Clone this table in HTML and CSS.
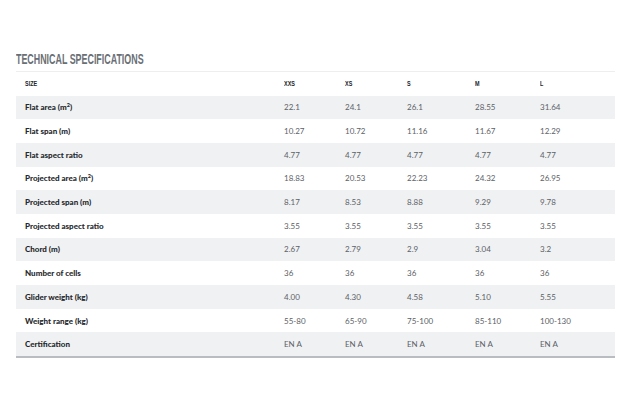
FILE: index.html
```html
<!DOCTYPE html>
<html>
<head>
<meta charset="utf-8">
<link rel="stylesheet" href="styles.css">
</head>
<body>
<section class="specs">
  <h2 class="title"><span class="title-text">TECHNICAL SPECIFICATIONS</span></h2>
  <table class="spec-table">
    <colgroup>
      <col class="c-label"><col class="c-xxs"><col class="c-xs"><col class="c-s"><col class="c-m"><col class="c-l">
    </colgroup>
    <thead>
      <tr><th><span class="cond">SIZE</span></th><th><span class="cond">XXS</span></th><th><span class="cond">XS</span></th><th><span class="cond">S</span></th><th><span class="cond">M</span></th><th><span class="cond">L</span></th></tr>
    </thead>
    <tbody>
      <tr><td>Flat area (m<sup>2</sup>)</td><td>22.1</td><td>24.1</td><td>26.1</td><td>28.55</td><td>31.64</td></tr>
      <tr><td>Flat span (m)</td><td>10.27</td><td>10.72</td><td>11.16</td><td>11.67</td><td>12.29</td></tr>
      <tr><td>Flat aspect ratio</td><td>4.77</td><td>4.77</td><td>4.77</td><td>4.77</td><td>4.77</td></tr>
      <tr><td>Projected area (m<sup>2</sup>)</td><td>18.83</td><td>20.53</td><td>22.23</td><td>24.32</td><td>26.95</td></tr>
      <tr><td>Projected span (m)</td><td>8.17</td><td>8.53</td><td>8.88</td><td>9.29</td><td>9.78</td></tr>
      <tr><td>Projected aspect ratio</td><td>3.55</td><td>3.55</td><td>3.55</td><td>3.55</td><td>3.55</td></tr>
      <tr><td>Chord (m)</td><td>2.67</td><td>2.79</td><td>2.9</td><td>3.04</td><td>3.2</td></tr>
      <tr><td>Number of cells</td><td>36</td><td>36</td><td>36</td><td>36</td><td>36</td></tr>
      <tr><td>Glider weight (kg)</td><td>4.00</td><td>4.30</td><td>4.58</td><td>5.10</td><td>5.55</td></tr>
      <tr><td>Weight range (kg)</td><td>55-80</td><td>65-90</td><td>75-100</td><td>85-110</td><td>100-130</td></tr>
      <tr><td>Certification</td><td>EN A</td><td>EN A</td><td>EN A</td><td>EN A</td><td>EN A</td></tr>
    </tbody>
  </table>
</section>
</body>
</html>
```
FILE: styles.css
```css
html, body {
  margin: 0;
  padding: 0;
  background: #ffffff;
}
body {
  font-family: Lato, "Open Sans", sans-serif;
}
.specs {
  padding: 50px 0 0 16px;
  width: 599px;
}
.title {
  margin: 0;
  height: 21px;
  font-family: "Liberation Sans", Arial, sans-serif;
  font-size: 14px;
  font-weight: 700;
  line-height: 18px;
  color: #6a6f76;
}
.title-text {
  display: inline-block;
  transform: scaleX(0.635);
  transform-origin: 0 0;
  white-space: nowrap;
}
.spec-table {
  width: 599px;
  table-layout: fixed;
  border-collapse: collapse;
  border-top: 1px solid #eceef0;
  border-bottom: 2px solid #b9bcc0;
}
.c-label { width: 259px; }
.c-xxs { width: 61px; }
.c-xs { width: 62px; }
.c-s { width: 68px; }
.c-m { width: 65px; }
.c-l { width: 84px; }
.spec-table th,
.spec-table td {
  padding: 0 0 0 9px;
  height: 23.7px;
  text-align: left;
  vertical-align: middle;
  white-space: nowrap;
}
.spec-table th {
  height: 23.5px;
  font-family: "Liberation Sans", Arial, sans-serif;
  font-size: 8px;
  font-weight: 700;
  color: #222428;
}
.cond {
  display: inline-block;
  transform: scaleX(0.68);
  transform-origin: 0 50%;
}
.spec-table td {
  font-size: 8px;
  color: #5c6166;
}
.spec-table td:first-child {
  font-weight: 900;
  color: #25282c;
}
.spec-table tbody tr:nth-child(odd) {
  background: #f0f1f3;
}
sup {
  font-size: 5.5px;
  line-height: 0;
  vertical-align: 3px;
}
```
